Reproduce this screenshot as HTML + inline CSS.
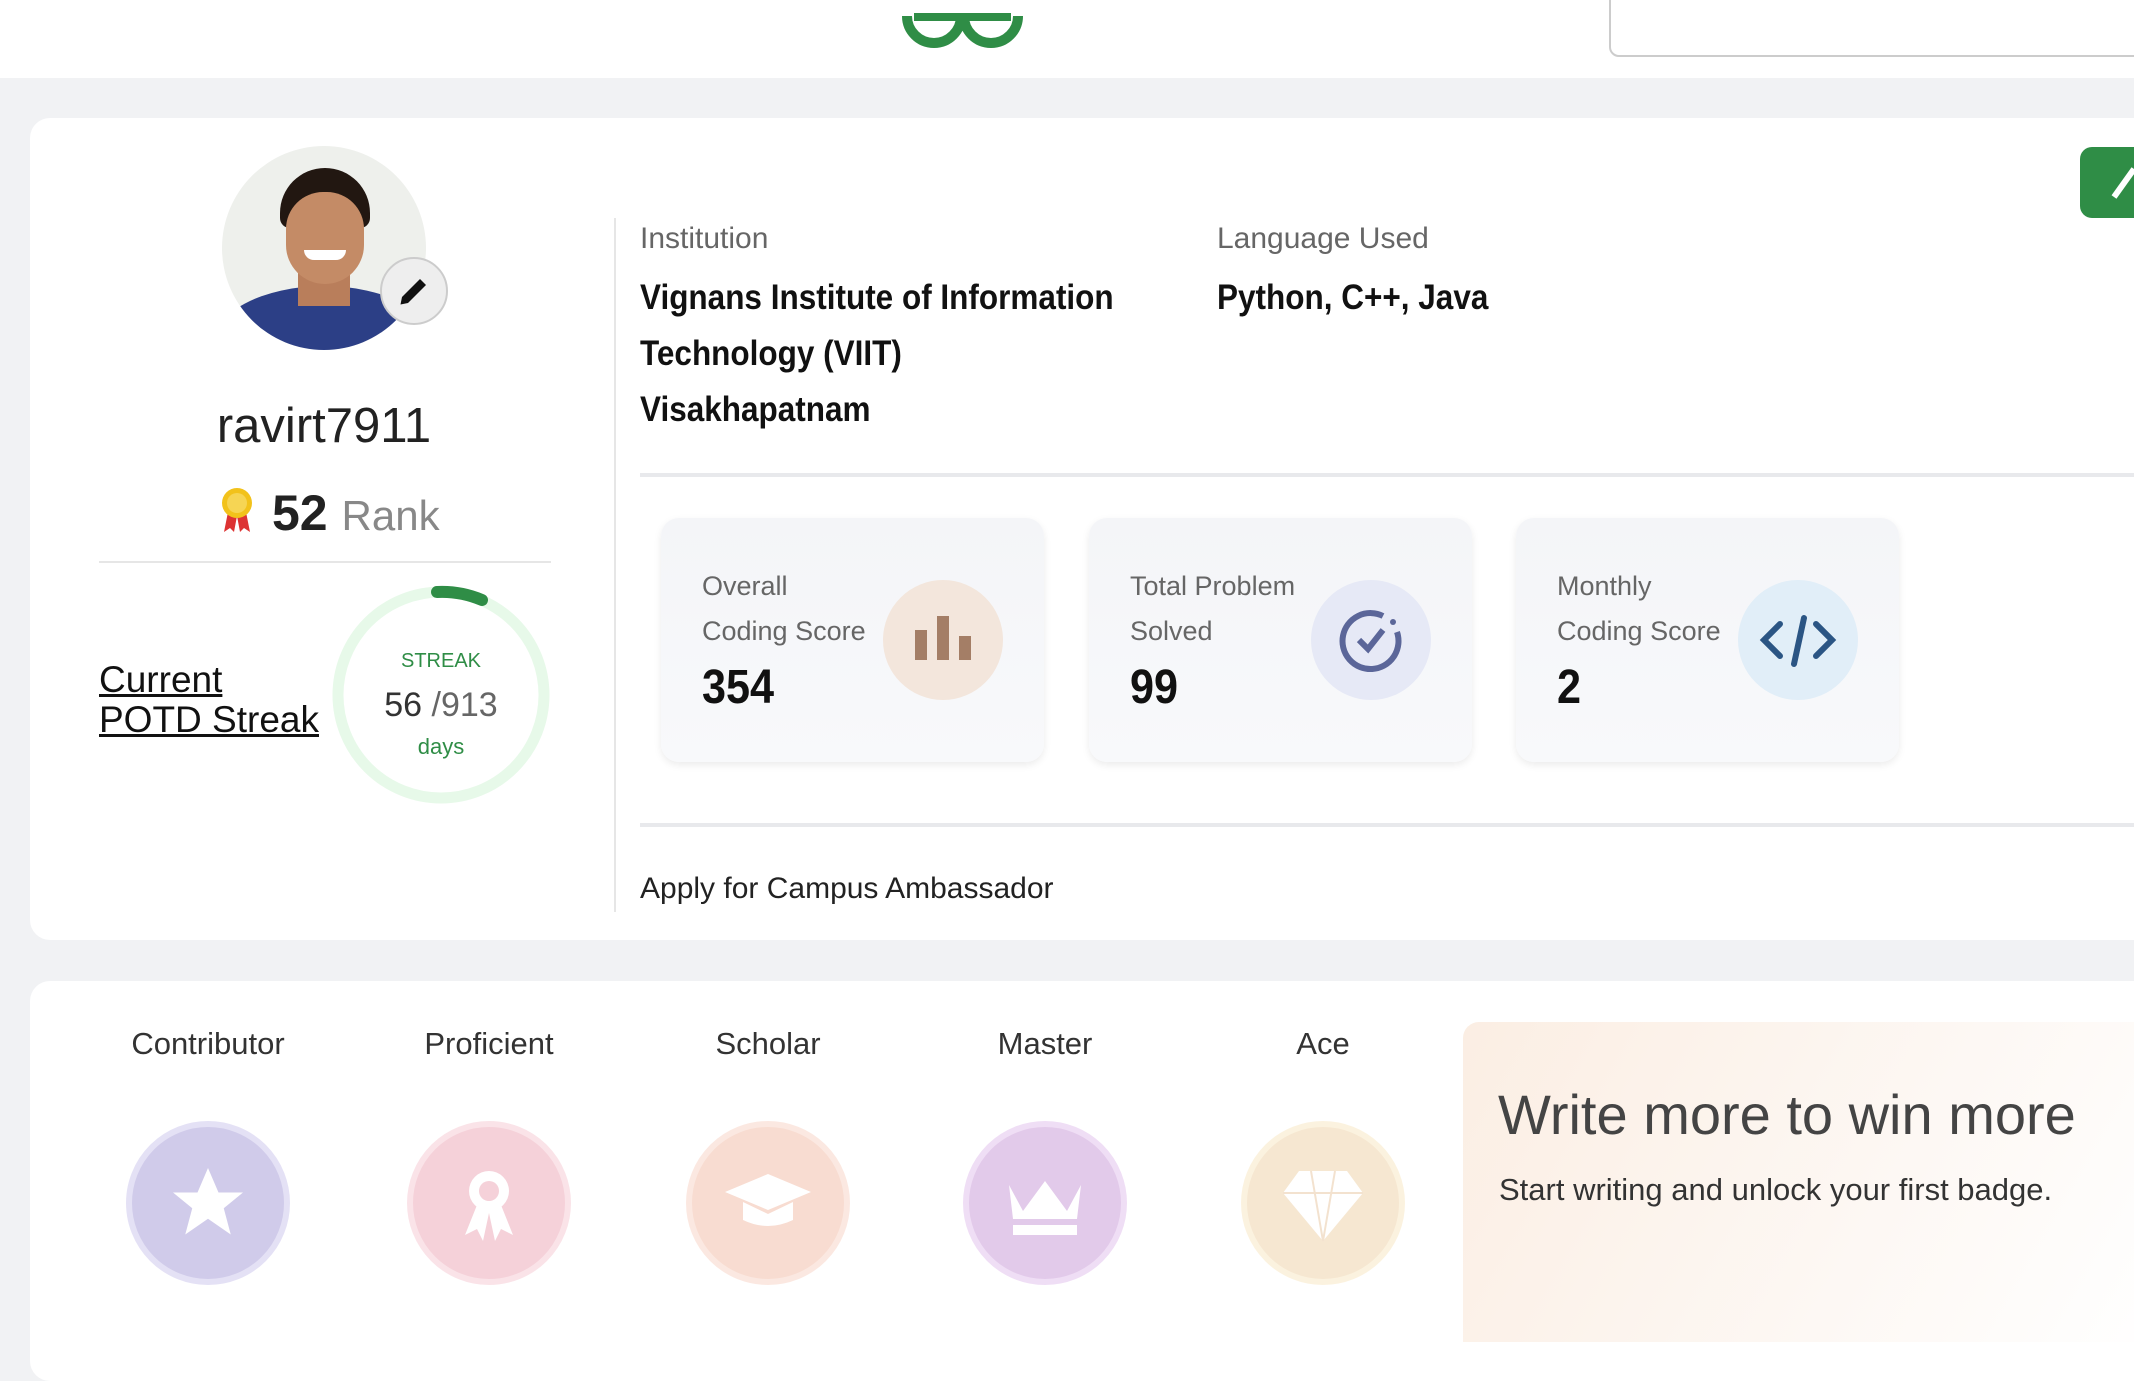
<!DOCTYPE html>
<html><head><meta charset="utf-8"><style>
*{margin:0;padding:0;box-sizing:border-box}
body{width:2134px;height:1330px;overflow:hidden;background:#f1f2f4;font-family:"Liberation Sans",sans-serif;color:#222;position:relative}
.a{position:absolute}
.hdr{left:0;top:0;width:2134px;height:78px;background:#fff}
.card{background:#fff;border-radius:20px}
.lbl{color:#666;font-size:30px}
.val{font-weight:bold;font-size:35px;color:#111;transform:scaleX(.9);transform-origin:left;white-space:nowrap}
.sc{width:383px;height:244px;border-radius:18px;background:linear-gradient(#f4f5f8,#f8f9fb);box-shadow:0 3px 8px rgba(0,0,0,.08)}
.sc .l{position:absolute;left:41px;top:46px;font-size:27px;color:#666;line-height:45px}
.sc .v{position:absolute;left:41px;top:142px;font-size:48px;color:#111;font-weight:bold;transform:scaleX(.9);transform-origin:left}
.sc .ic{position:absolute;left:222px;top:62px;width:120px;height:120px;border-radius:50%}
.bl{font-size:31px;color:#333;text-align:center;width:240px}
.bd{width:164px;height:164px;border-radius:50%}
.fade{opacity:.8}
</style></head><body>
<div class="a hdr"></div>
<svg class="a" style="left:900px;top:0" width="125" height="50" viewBox="0 0 125 50"><path d="M7 16 A27 27 0 0 0 61 16 M64 16 A27 27 0 0 0 118 16" fill="none" stroke="#2f8d46" stroke-width="10"/><path d="M14 17 H111" stroke="#2f8d46" stroke-width="8"/></svg>
<div class="a" style="left:1609px;top:-10px;width:540px;height:67px;border:2px solid #ccc;border-radius:10px;background:#fff"></div>

<div class="a card" style="left:30px;top:118px;width:2130px;height:822px"></div>
<div class="a" style="left:222px;top:146px;width:204px;height:204px;border-radius:50%;overflow:hidden;background:#eef0ec">
 <div class="a" style="left:-10px;top:140px;width:224px;height:120px;border-radius:50% 50% 0 0;background:#2c3f86"></div>
 <div class="a" style="left:76px;top:100px;width:52px;height:60px;background:#b97e5b"></div>
 <div class="a" style="left:58px;top:22px;width:90px;height:60px;border-radius:45px 45px 10px 10px;background:#221711"></div>
 <div class="a" style="left:64px;top:46px;width:78px;height:92px;border-radius:40px 40px 42px 42px;background:#c48b66"></div>
 <div class="a" style="left:82px;top:104px;width:42px;height:10px;border-radius:0 0 20px 20px;background:#fff"></div>
</div>
<div class="a" style="left:380px;top:257px;width:68px;height:68px;border-radius:50%;background:#eee;border:2px solid #ccc"></div>
<svg class="a" style="left:396px;top:273px" width="36" height="36" viewBox="0 0 24 24"><path d="M3 21l1-5L16 4l4 4L8 20z" fill="#111"/></svg>
<div class="a" style="left:124px;top:398px;width:400px;text-align:center;font-size:49px;color:#222">ravirt7911</div>
<svg class="a" style="left:220px;top:486px" width="34" height="48" viewBox="0 0 34 48"><path d="M8 26 L4 46 L10 42 L14 46 L17 30Z M26 26 L30 46 L24 42 L20 46 L17 30Z" fill="#d33"/><circle cx="17" cy="17" r="15" fill="#f2c21b"/><circle cx="17" cy="17" r="10" fill="#f6d554"/></svg>
<div class="a" style="left:272px;top:484px;font-size:50px;font-weight:bold;color:#222">52 <span style="font-weight:normal;color:#888;font-size:42px">Rank</span></div>
<div class="a" style="left:99px;top:561px;width:452px;height:2px;background:#e6e6e6"></div>
<div class="a" style="left:99px;top:660px;font-size:37px;line-height:40px;text-decoration:underline;color:#111">Current<br>POTD Streak</div>
<svg class="a" style="left:330px;top:584px" width="222" height="222" viewBox="0 0 222 222"><circle cx="111" cy="111" r="103" fill="none" stroke="#e7f9e9" stroke-width="11"/><path d="M107 8 A103 103 0 0 1 152 16" fill="none" stroke="#2f8d46" stroke-width="12" stroke-linecap="round"/></svg>
<div class="a" style="left:341px;top:650px;width:200px;text-align:center;color:#2f8d46;font-size:20px">STREAK</div>
<div class="a" style="left:341px;top:686px;width:200px;text-align:center;color:#333;font-size:34px">56 <span style="color:#666">/913</span></div>
<div class="a" style="left:341px;top:734px;width:200px;text-align:center;color:#2f8d46;font-size:22px">days</div>
<div class="a" style="left:614px;top:218px;width:2px;height:694px;background:#e6e6e6"></div>

<div class="a lbl" style="left:640px;top:222px">Institution</div>
<div class="a val" style="left:640px;top:270px;line-height:56px">Vignans Institute of Information<br>Technology (VIIT)<br>Visakhapatnam</div>
<div class="a lbl" style="left:1217px;top:222px">Language Used</div>
<div class="a val" style="left:1217px;top:270px;line-height:56px">Python, C++, Java</div>
<div class="a" style="left:640px;top:473px;width:1500px;height:4px;background:#e8e9ec"></div>
<div class="a" style="left:2080px;top:147px;width:80px;height:71px;border-radius:12px;background:#2f8d46"></div>
<svg class="a" style="left:2110px;top:165px" width="24" height="36" viewBox="0 0 24 36"><path d="M4 32 L24 4" stroke="#fff" stroke-width="6"/></svg>

<div class="a sc" style="left:661px;top:518px"><div class="l">Overall<br>Coding Score</div><div class="v">354</div><div class="ic" style="background:#f3e6dc"><svg width="120" height="120"><rect x="32" y="50" width="12" height="30" fill="#a47e66"/><rect x="54" y="36" width="12" height="44" fill="#a47e66"/><rect x="76" y="56" width="12" height="24" fill="#a47e66"/></svg></div></div>
<div class="a sc" style="left:1089px;top:518px"><div class="l">Total Problem<br>Solved</div><div class="v">99</div><div class="ic" style="background:#e6e9f6"><svg width="120" height="120"><path d="M72 36 A28 28 0 1 0 86 52" fill="none" stroke="#5b6699" stroke-width="6"/><circle cx="82" cy="42" r="3" fill="#5b6699"/><path d="M48 60 L57 69 L72 50" fill="none" stroke="#5b6699" stroke-width="6"/></svg></div></div>
<div class="a sc" style="left:1516px;top:518px"><div class="l">Monthly<br>Coding Score</div><div class="v">2</div><div class="ic" style="background:#e1eef8"><svg width="120" height="120"><path d="M42 44 L26 60 L42 76 M78 44 L94 60 L78 76 M66 38 L56 84" fill="none" stroke="#2b5584" stroke-width="6" stroke-linecap="round"/></svg></div></div>
<div class="a" style="left:640px;top:823px;width:1500px;height:4px;background:#e8e9ec"></div>
<div class="a" style="left:640px;top:872px;font-size:30px;color:#222">Apply for Campus Ambassador</div>

<div class="a card" style="left:30px;top:981px;width:2130px;height:400px"></div>
<div class="a bl" style="left:88px;top:1026px">Contributor</div>
<div class="a bl" style="left:369px;top:1026px">Proficient</div>
<div class="a bl" style="left:648px;top:1026px">Scholar</div>
<div class="a bl" style="left:925px;top:1026px">Master</div>
<div class="a bl" style="left:1203px;top:1026px">Ace</div>
<div class="fade">
<div class="a bd" style="left:126px;top:1121px;background:#c5bfe6;border:6px solid #dedaf3"></div>
<svg class="a" style="left:166px;top:1161px" width="84" height="84" viewBox="0 0 24 24"><path d="M12 2l3 7h7l-5.5 4.5 2 7.5L12 16.5 5.5 21l2-7.5L2 9h7z" fill="#fff"/></svg>
<div class="a bd" style="left:407px;top:1121px;background:#f3c6d0;border:6px solid #f9dde3"></div>
<svg class="a" style="left:449px;top:1161px" width="80" height="84" viewBox="0 0 80 84"><circle cx="40" cy="30" r="20" fill="#fff"/><circle cx="40" cy="30" r="10" fill="#f3c6d0"/><path d="M28 44 L16 74 L28 68 L34 80 L40 52 L46 80 L52 68 L64 74 L52 44Z" fill="#fff"/></svg>
<div class="a bd" style="left:686px;top:1121px;background:#f7d4c6;border:6px solid #fbe3da"></div>
<svg class="a" style="left:723px;top:1170px" width="90" height="64" viewBox="0 0 90 64"><path d="M45 4 L88 22 L45 40 L2 22Z" fill="#fff"/><path d="M20 32 V50 Q45 62 70 50 V32 L45 44Z" fill="#fff"/></svg>
<div class="a bd" style="left:963px;top:1121px;background:#dcbde6;border:6px solid #ecd6f3"></div>
<svg class="a" style="left:1001px;top:1171px" width="88" height="66" viewBox="0 0 88 66"><path d="M8 14 L22 40 L44 10 L66 40 L80 14 L76 48 H12Z" fill="#fff"/><rect x="12" y="54" width="64" height="10" fill="#fff"/></svg>
<div class="a bd" style="left:1241px;top:1121px;background:#f5e2c6;border:6px solid #fbf0d8"></div>
<svg class="a" style="left:1281px;top:1163px" width="84" height="84" viewBox="0 0 84 84"><path d="M18 8 H66 L82 30 L42 78 L2 30Z" fill="#fff"/><path d="M2 30 H82 M30 8 L42 78 M54 8 L42 78" stroke="#f1dcc4" stroke-width="2"/></svg>
</div>
<div class="a" style="left:1463px;top:1022px;width:700px;height:320px;border-radius:16px 0 0 0;background:linear-gradient(120deg,#fbeee3,#fdf8f4 60%,#fff)"></div>
<div class="a" style="left:1498px;top:1082px;font-size:56px;color:#444">Write more to win more</div>
<div class="a" style="left:1499px;top:1172px;font-size:31px;color:#333">Start writing and unlock your first badge.</div>
</body></html>
